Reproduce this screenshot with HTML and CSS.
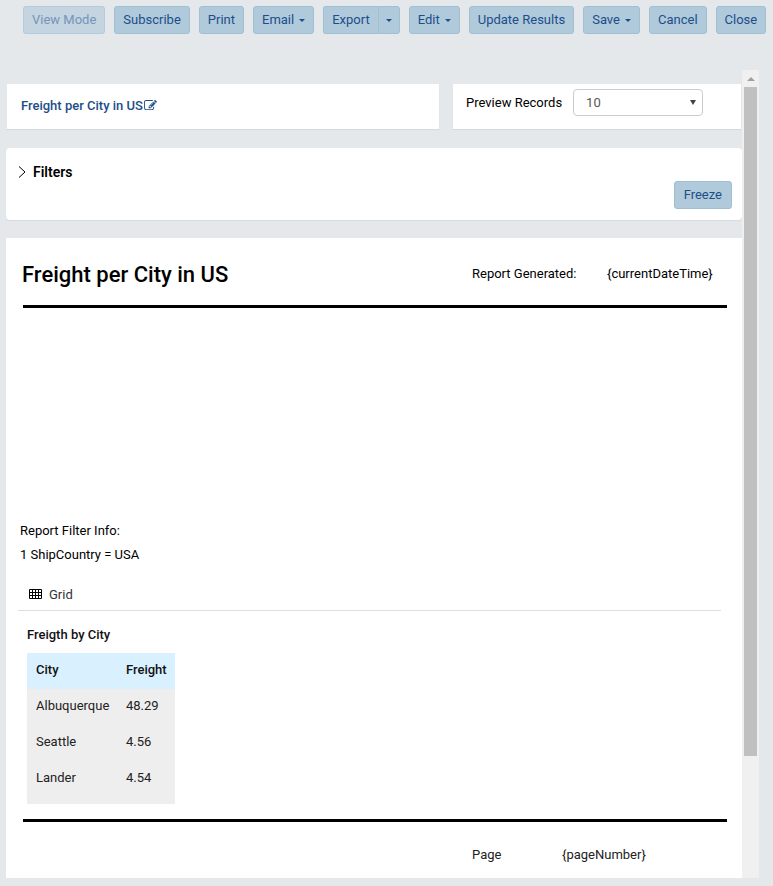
FILE: index.html
```html
<!DOCTYPE html>
<html lang="en">
<head>
<meta charset="utf-8">
<meta name="viewport" content="width=device-width, initial-scale=1">
<title>Freight per City in US</title>
<link rel="stylesheet" href="styles.css">
</head>
<body>
<header class="toolbar">
  <button class="btn" type="button" disabled>View Mode</button>
  <button class="btn" type="button">Subscribe</button>
  <button class="btn" type="button">Print</button>
  <button class="btn" type="button">Email<span class="caret"></span></button>
  <div class="btn-group">
    <button class="btn" type="button">Export</button>
    <button class="btn btn-toggle" type="button" aria-label="Export options"><span class="caret"></span></button>
  </div>
  <button class="btn" type="button">Edit<span class="caret"></span></button>
  <button class="btn" type="button">Update Results</button>
  <button class="btn" type="button">Save<span class="caret"></span></button>
  <button class="btn" type="button">Cancel</button>
  <button class="btn" type="button">Close</button>
</header>
<div class="viewport">
  <main class="content">
    <div class="top-row">
      <section class="card title-card">
        <a class="report-link" href="#">Freight per City in US<svg viewBox="0 0 1792 1536" width="13" height="11" aria-hidden="true"><path fill="currentColor" d="M888 1056l116-116-152-152-116 116v56h96v96h56zM1328 336q-16-16-33 1l-350 350q-17 17-1 33t33-1l350-350q17-17 1-33zM1408 930v190q0 119-84.500 203.500t-203.500 84.500h-832q-119 0-203.500-84.500t-84.500-203.500v-832q0-119 84.500-203.500t203.500-84.500h832q63 0 117 25 15 7 18 23 3 17-9 29l-49 49q-14 14-32 8-23-6-45-6h-832q-66 0-113 47t-47 113v832q0 66 47 113t113 47h832q66 0 113-47t47-113v-126q0-13 9-22l64-64q15-15 35-7t20 29zM1312 192l288 288-672 672h-288v-288zM1756 324l-92 92-288-288 92-92q28-28 68-28t68 28l152 152q28 28 28 68t-28 68z"/></svg></a>
      </section>
      <section class="card preview-card">
        <label for="records">Preview Records</label>
        <div class="select-wrap">
          <select id="records"><option>10</option><option>100</option></select>
          <span class="select-arrow"></span>
        </div>
      </section>
    </div>
    <section class="card filters">
      <button class="filters-toggle" type="button"><svg viewBox="0 0 8 12" width="8" height="12" aria-hidden="true"><path d="M1 .5L7 6L1 11.500" fill="none" stroke="currentColor"/></svg>Filters</button>
      <button class="btn freeze" type="button">Freeze</button>
    </section>
    <article class="report">
      <div class="report-head">
        <h1>Freight per City in US</h1>
        <span>Report Generated:</span>
        <span>{currentDateTime}</span>
      </div>
      <div class="rule"></div>
      <div class="filter-info">
        <p>Report Filter Info:</p>
        <p>1 ShipCountry = USA</p>
      </div>
      <div class="part-tab"><svg viewBox="0 0 13 10" width="13" height="10" aria-hidden="true"><path d="M.5.5H12.500V9.500H.5ZM.5 3.500H12.500M.5 6.500H12.500M3.500.5V9.500M6.500.5V9.500M9.500.5V9.500" fill="none" stroke="currentColor"/></svg>Grid</div>
      <div class="part-body">
        <h2>Freigth by City</h2>
        <table>
          <thead><tr><th scope="col">City</th><th scope="col">Freight</th></tr></thead>
          <tbody>
            <tr><td>Albuquerque</td><td>48.29</td></tr>
            <tr><td>Seattle</td><td>4.56</td></tr>
            <tr><td>Lander</td><td>4.54</td></tr>
          </tbody>
        </table>
      </div>
      <div class="rule"></div>
      <footer class="report-foot">
        <span>Page</span>
        <span>{pageNumber}</span>
      </footer>
    </article>
  </main>
  <div class="scrollbar" aria-hidden="true">
    <span class="scroll-up"></span>
    <span class="scroll-thumb"></span>
    <span class="scroll-rest"></span>
  </div>
</div>
</body>
</html>
```
FILE: styles.css
```css
* { box-sizing: border-box; }

body {
  margin: 0;
  background: #e4e8eb;
  color: #000;
  font: 13px/20px Roboto, "Liberation Sans", sans-serif;
}

h1, h2, p { margin: 0; }
svg { display: block; flex: none; }

.toolbar {
  display: flex;
  gap: 9px;
  padding: 6px 5px 36px 23px;
}

.btn {
  display: inline-flex;
  align-items: center;
  justify-content: center;
  gap: 5px;
  height: 28px;
  padding: 0 8px;
  border: 1px solid #9fc0d3;
  border-radius: 3px;
  background: #b0cadb;
  color: #1c4e89;
  font: inherit;
  white-space: nowrap;
}

.btn:disabled {
  border-color: #b4cbdb;
  background: #c4d4e0;
  color: #7695b8;
}

.caret {
  border: 3px solid transparent;
  border-top-color: currentColor;
  border-bottom: 0;
}

.btn-group { display: flex; }
.btn-group .btn:first-child { border-radius: 3px 0 0 3px; border-right: 0; }
.btn-group .btn-toggle { padding: 0 7px; border-radius: 0 3px 3px 0; }

.viewport {
  display: grid;
  grid-template-columns: 1fr 17px;
  margin: 0 14px 8px 6px;
}

.content { padding-top: 14px; }

.card {
  background: #fff;
  box-shadow: 0 1px 1px #d6dade;
}

.top-row {
  display: grid;
  grid-template-columns: 3fr 2fr;
  gap: 14px;
  padding: 0 1px;
  margin-bottom: 19px;
}

.title-card, .preview-card {
  display: flex;
  height: 45px;
}

.title-card { align-items: center; padding: 0 14px 2px; }

.report-link {
  display: flex;
  align-items: center;
  gap: 1px;
  color: #1c4e89;
  font-weight: 500;
  text-decoration: none;
}

.preview-card {
  align-items: flex-start;
  gap: 11px;
  padding: 5px 13px;
}

.preview-card label { line-height: 28px; }
.select-wrap { position: relative; }

select {
  appearance: none;
  display: block;
  width: 130px;
  height: 27px;
  padding: 0 12px;
  border: 1px solid #ccc;
  border-radius: 4px;
  background: #fff;
  color: #555;
  font: inherit;
}

.select-arrow {
  position: absolute;
  top: 11px;
  right: 7px;
  border: 3px solid transparent;
  border-top: 5px solid #444;
  border-bottom: 0;
  pointer-events: none;
}

.filters {
  display: flex;
  flex-direction: column;
  padding: 14px 10px 11px 12px;
  margin-bottom: 18px;
  border-radius: 4px;
}

.filters-toggle {
  display: flex;
  align-items: center;
  align-self: flex-start;
  gap: 7px;
  height: 19px;
  padding: 0;
  border: 0;
  background: none;
  color: #000;
  font: inherit;
  font-size: 14px;
  font-weight: 600;
}

.freeze { align-self: flex-end; padding: 0 9px; }

.report {
  padding: 24px 15px 13px 12px;
  background: #fff;
}

.report-head {
  display: grid;
  grid-template-columns: 1fr 135px 120px;
  align-items: start;
  height: 43px;
  padding-left: 4px;
  line-height: 24px;
}

h1 { font-size: 22px; line-height: 26px; font-weight: 500; }

.rule { height: 3px; margin-left: 5px; background: #000; }

.filter-info {
  padding: 211px 2px 16px;
  line-height: 24px;
}

.part-tab {
  display: flex;
  align-items: center;
  gap: 7px;
  height: 28px;
  margin-right: 6px;
  padding: 0 11px 4px;
  border-bottom: 1px solid #ddd;
  color: #333;
}

.part-tab svg { margin-bottom: 2px; color: #000; }
.part-body { padding: 14px 9px 15px; color: #222; }
h2 { font-size: 13px; line-height: 20px; font-weight: 500; margin-bottom: 8px; color: #111; }

table {
  width: 148px;
  table-layout: fixed;
  border-spacing: 0;
  border-bottom: 7px solid #eee;
  background: #eee;
}

th, td {
  height: 36px;
  padding: 0 7px 2px 9px;
  text-align: left;
  font-weight: 400;
}

th:first-child { width: 90px; }
th { background: #d9f1fe; color: #111; font-weight: 500; }

.report-foot {
  display: grid;
  grid-template-columns: 1fr 90px 165px;
  padding-top: 23px;
  color: #222;
}

.report-foot span:first-child { grid-column: 2; }

.scrollbar {
  display: grid;
  grid-template-rows: 17px 669fr 122fr;
  justify-items: center;
  background: #f0f0f0;
}

.scroll-up {
  align-self: center;
  border: 4px solid transparent;
  border-top: 0;
  border-bottom-color: #a0a0a0;
}

.scroll-thumb { width: 13px; background: #c0c0c0; }
```
